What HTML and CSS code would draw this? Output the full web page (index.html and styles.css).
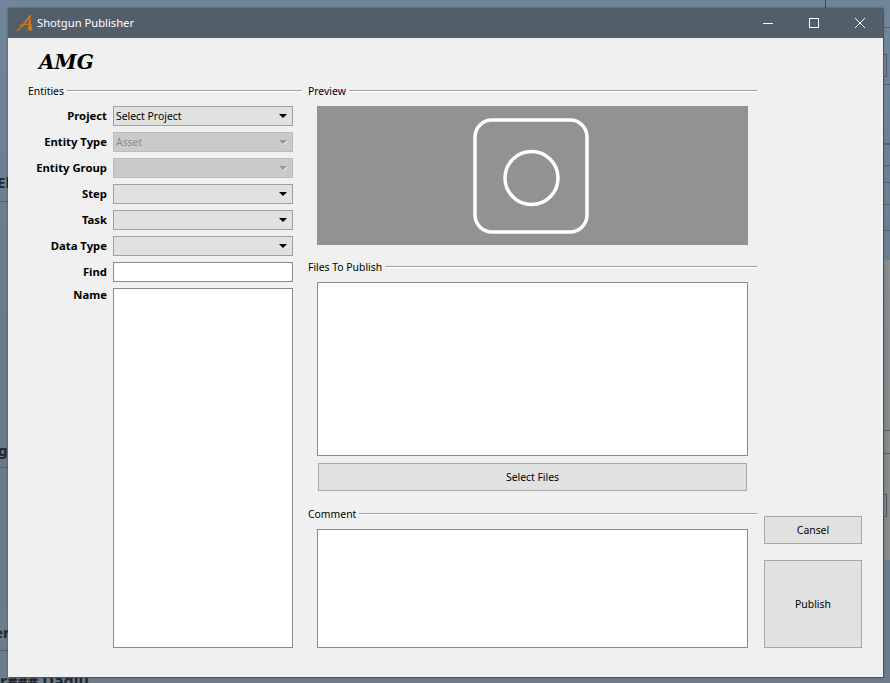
FILE: index.html
```html
<!DOCTYPE html>
<html lang="en">
<head>
    <meta charset="UTF-8">
    <meta name="viewport" content="width=device-width, initial-scale=1.0">
    <title>Shotgun Publisher</title>
    <link rel="stylesheet" href="styles.css">
</head>
<body>
    <!-- bits of the app behind the dialog -->
    <div class="backdrop">
        <span class="bg-text bg-er">El</span>
        <span class="bg-text bg-g">g</span>
        <span class="bg-text bg-en">er</span>
        <span class="bg-text bg-dadiu">r### Dadiu</span>
        <span class="bg-bracket bg-bracket-1"></span>
        <span class="bg-bracket bg-bracket-2"></span>
    </div>

    <div class="window">
        <div class="titlebar">
            <svg class="app-icon" width="18" height="18" viewBox="0 0 18 18">
                <path d="M0 16.500 C4.500 14 9 7 13.500 1 L14.800 1 C14.200 7 14.800 12 16.500 15.500 L16.500 16.500 L12 16.500 C12.300 12 12.500 8 13 4.500 C10 8.500 6 14.500 1 17 Z" fill="#d8770f"/>
                <path d="M3.500 11.500 C8 10 12 10 16 10.500" fill="none" stroke="#d8770f" stroke-width="1.200"/>
            </svg>
            <span class="title">Shotgun Publisher</span>
            <div class="controls">
                <svg width="12" height="12" viewBox="0 0 12 12"><path d="M1 6.500H11" stroke="#fff" fill="none"/></svg>
                <svg width="12" height="12" viewBox="0 0 12 12"><rect x="1.500" y="1.500" width="9" height="9" stroke="#fff" fill="none"/></svg>
                <svg width="12" height="12" viewBox="0 0 12 12"><path d="M1 1L11 11M11 1L1 11" stroke="#fff" fill="none"/></svg>
            </div>
        </div>

        <div class="content">
            <div class="logo">AMG</div>

            <div class="columns">
                <section class="col-entities">
                    <div class="group-title"><span>Entities</span></div>
                    <div class="form-grid">
                        <label>Project</label>
                        <div class="combo">Select Project<i class="arrow"></i></div>
                        <label>Entity Type</label>
                        <div class="combo disabled">Asset<i class="arrow"></i></div>
                        <label>Entity Group</label>
                        <div class="combo disabled"><i class="arrow"></i></div>
                        <label>Step</label>
                        <div class="combo"><i class="arrow"></i></div>
                        <label>Task</label>
                        <div class="combo"><i class="arrow"></i></div>
                        <label>Data Type</label>
                        <div class="combo"><i class="arrow"></i></div>
                        <label>Find</label>
                        <input class="field" type="text">
                        <label class="name-label">Name</label>
                        <div class="field name-list"></div>
                    </div>
                </section>

                <section class="col-main">
                    <div class="group-title"><span>Preview</span></div>
                    <div class="preview">
                        <svg width="116" height="116" viewBox="0 0 116 116">
                            <rect x="2" y="2" width="112" height="112" rx="17" fill="none" stroke="#fff" stroke-width="3.500"/>
                            <circle cx="58.500" cy="60" r="26.500" fill="none" stroke="#fff" stroke-width="3.500"/>
                        </svg>
                    </div>

                    <div class="group-title files-title"><span>Files To Publish</span></div>
                    <div class="field files-list"></div>
                    <button class="btn select-files">Select Files</button>

                    <div class="group-title comment-title"><span>Comment</span></div>
                    <div class="field comment-box"></div>
                </section>

                <section class="col-actions">
                    <button class="btn cancel">Cansel</button>
                    <button class="btn publish">Publish</button>
                </section>
            </div>
        </div>
    </div>
</body>
</html>
```

FILE: styles.css
```css
* {
    box-sizing: border-box;
    margin: 0;
    padding: 0;
    font-family: 'Noto Sans', sans-serif;
}

body {
    position: relative;
    width: 890px;
    height: 683px;
    overflow: hidden;
    background: linear-gradient(180deg, #71869a, #68798a 55%, #6c7c8a);
    padding: 8px 7px 6px 8px;
    font-size: 10.4px;
    color: #000;
}

.backdrop {
    position: absolute;
    inset: 0;
    background:
        linear-gradient(#555f69, #555f69) 0 201px / 8px 1px no-repeat,
        linear-gradient(#555f69, #555f69) 0 467px / 8px 1px no-repeat,
        linear-gradient(#555f69, #555f69) 0 650px / 8px 1px no-repeat,
        linear-gradient(#3c4650, #3c4650) 825px 0 / 1px 8px no-repeat,
        linear-gradient(#56616b, #56616b) 883px 27px / 7px 1px no-repeat,
        linear-gradient(#56616b, #56616b) 883px 84px / 7px 1px no-repeat,
        linear-gradient(#56616b, #56616b) 883px 143px / 7px 2px no-repeat,
        linear-gradient(#56616b, #56616b) 883px 165px / 7px 1px no-repeat,
        linear-gradient(#56616b, #56616b) 883px 182px / 7px 1px no-repeat,
        linear-gradient(#56616b, #56616b) 883px 204px / 7px 1px no-repeat,
        linear-gradient(#56616b, #56616b) 883px 230px / 7px 1px no-repeat,
        linear-gradient(#5c5f60, #5c5f60) 883px 430px / 7px 1px no-repeat,
        linear-gradient(#5c5f60, #5c5f60) 883px 453px / 7px 1px no-repeat,
        linear-gradient(90deg, transparent 880px, rgba(165, 160, 140, 0.55) 890px) 0 260px / 890px 300px no-repeat;
}

.bg-text {
    position: absolute;
    font-size: 15px;
    font-weight: bold;
    line-height: 18px;
    color: #20262c;
}

.bg-er {
    left: -3px;
    top: 173px;
}

.bg-g {
    left: -2px;
    top: 441px;
}

.bg-en {
    left: -6px;
    top: 623px;
}

.bg-dadiu {
    left: 0;
    top: 672px;
    font-size: 16px;
}

.bg-bracket {
    position: absolute;
    left: 883px;
    width: 4px;
    border: 1px solid #4e565e;
    border-left: none;
}

.bg-bracket-1 {
    top: 54px;
    height: 23px;
}

.bg-bracket-2 {
    top: 494px;
    height: 23px;
}

.window {
    position: relative;
    width: 875px;
    height: 669px;
    background: #f0f0f0;
    box-shadow: 1px 1px 0 #4a545e, 0 0 2px rgba(30, 40, 50, 0.6);
    display: flex;
    flex-direction: column;
}

.titlebar {
    height: 30px;
    background: #535e6b;
    display: flex;
    align-items: center;
    padding-left: 8px;
    flex-shrink: 0;
}

.app-icon {
    margin-right: 3px;
}

.title {
    color: #fff;
    font-size: 11.2px;
    padding-bottom: 2px;
}

.controls {
    margin-left: auto;
    display: flex;
    gap: 34px;
    padding-right: 17px;
}

.content {
    flex: 1;
    padding: 0 21px 29px 20px;
    display: flex;
    flex-direction: column;
}

.logo {
    height: 46px;
    padding: 9px 0 0 11px;
    font-family: 'DejaVu Serif', serif;
    font-style: italic;
    font-weight: bold;
    font-size: 20px;
    line-height: 30px;
}

.columns {
    flex: 1;
    display: flex;
    min-height: 0;
}

.group-title {
    height: 14px;
    line-height: 14px;
    display: flex;
    align-items: center;
    gap: 3px;
}

.group-title::after {
    content: "";
    flex: 1;
    height: 1px;
    background: #a0a0a0;
    box-shadow: 0 1px 0 #fff;
    margin-top: -2px;
}

.col-entities {
    width: 274px;
    margin-right: 6px;
    display: flex;
    flex-direction: column;
}

.form-grid {
    flex: 1;
    margin-top: 8px;
    width: 265px;
    display: grid;
    grid-template-columns: 79px 180px;
    grid-template-rows: repeat(7, 20px) 1fr;
    column-gap: 6px;
    row-gap: 6px;
}

label {
    font-size: 11.3px;
    font-weight: bold;
    text-align: right;
    line-height: 20px;
}

.name-label {
    line-height: 14px;
}

.combo {
    position: relative;
    background: #e1e1e1;
    border: 1px solid #a0a0a0;
    line-height: 18px;
    padding-left: 2px;
}

.combo.disabled {
    background: #cacaca;
    border-color: #bcbcbc;
    color: #8a8a8a;
}

.arrow {
    position: absolute;
    right: 5px;
    top: 7px;
    width: 0;
    height: 0;
    border-left: 4px solid transparent;
    border-right: 4px solid transparent;
    border-top: 4px solid #000;
}

.disabled .arrow {
    border-top-color: #959595;
    filter: drop-shadow(1px 1px 0 #e8e8e8);
}

.field {
    background: #fff;
    border: 1px solid #8a8a8f;
    border-radius: 0;
    outline: none;
}

.col-main {
    width: 449px;
    margin-right: 7px;
    display: flex;
    flex-direction: column;
}

.preview {
    margin: 8px 0 0 9px;
    width: 431px;
    height: 139px;
    padding-right: 4px;
    background: #929292;
    display: flex;
    align-items: center;
    justify-content: center;
}

.files-title {
    margin-top: 15px;
}

.files-list {
    margin: 8px 0 0 9px;
    width: 431px;
    height: 174px;
}

.btn {
    background: #e1e1e1;
    border: 1px solid #a8a8a8;
    font-size: 10.4px;
    color: #000;
}

.select-files {
    margin: 7px 0 0 10px;
    width: 429px;
    height: 28px;
}

.comment-title {
    margin-top: 16px;
}

.comment-box {
    margin: 8px 0 0 9px;
    width: 431px;
    flex: 1;
}

.col-actions {
    width: 98px;
    display: flex;
    flex-direction: column;
    justify-content: flex-end;
    gap: 16px;
}

.cancel {
    height: 28px;
}

.publish {
    height: 88px;
}
```
